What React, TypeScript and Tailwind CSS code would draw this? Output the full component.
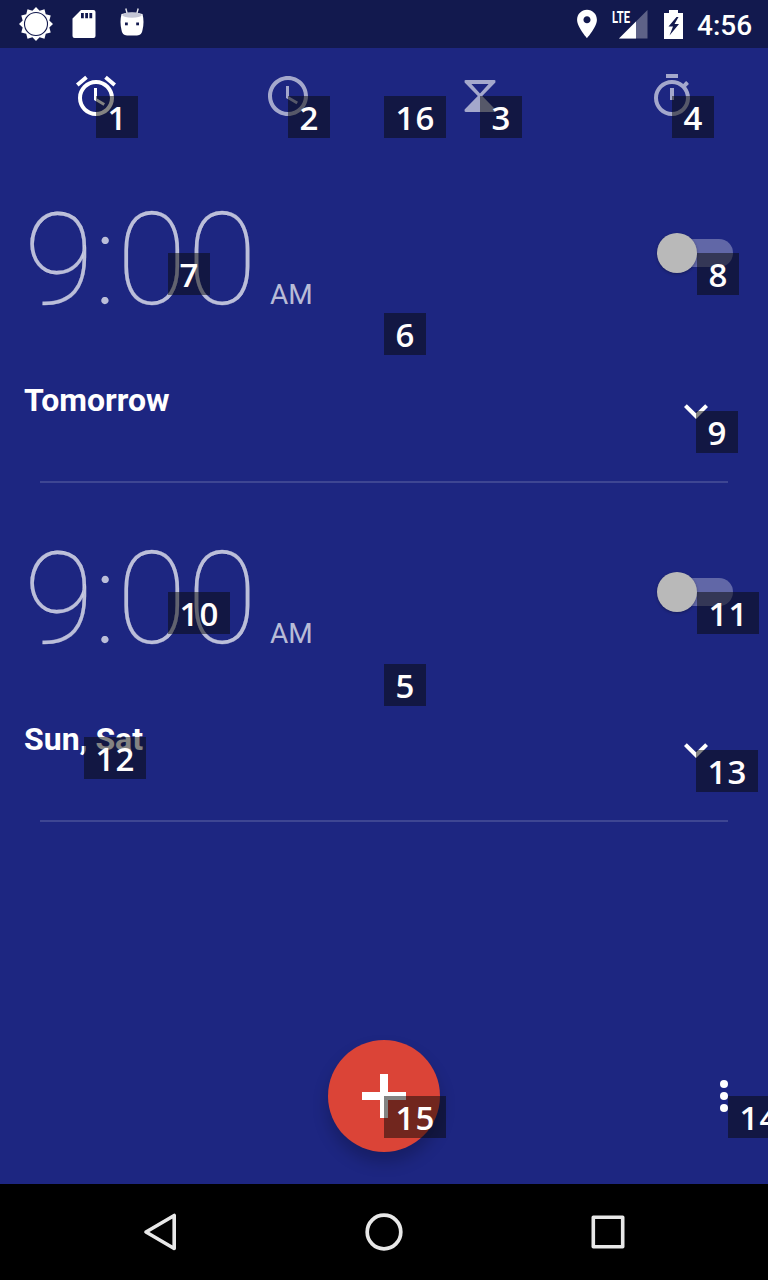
import React from "react";

function SunIcon() {
  const points = Array.from({ length: 24 }, (_, i) => {
    const a = (i * Math.PI) / 12;
    const r = i % 2 === 0 ? 17 : 13.8;
    return `${(17 + r * Math.sin(a)).toFixed(2)},${(17 - r * Math.cos(a)).toFixed(2)}`;
  }).join(" ");
  return (
    <svg className="h-[34px] w-[34px]" viewBox="0 0 34 34">
      <polygon points={points} fill="#fff" />
      <circle cx="17" cy="17" r="11.5" fill="#fff" stroke="#12194e" strokeWidth="1.1" />
    </svg>
  );
}

function SdCardIcon() {
  return (
    <svg className="ml-[19px] h-7 w-6" viewBox="0 0 24 28" fill="#fff">
      <path
        fillRule="evenodd"
        d="M9 0H21.500Q23.500 0 23.500 2V26Q23.500 28 21.500 28H2.500Q.5 28 .5 26V8.500ZM9 3V8.300H11.800V3ZM13.200 3V8.300H16V3ZM17.400 3V8.300H20.200V3Z"
      />
    </svg>
  );
}

function DroidIcon() {
  return (
    <svg className="mb-1 ml-6 h-7 w-6" viewBox="0 0 24 28">
      <path d="M5.800 .5L7.300 6M18.200 .5L16.700 6" stroke="#fff" strokeOpacity=".9" strokeWidth="1.400" />
      <path d="M1.500 6Q12 3 22.500 6Q24.500 14 22.500 22Q22 27 17 27.500H7Q2 27 1.500 22Q-.5 14 1.500 6Z" fill="#fff" />
      <path d="M2 7Q4 4.500 8 4.500H16Q20 4.500 22 7Q20 9.700 12 9.700Q4 9.700 2 7Z" fill="#c4c6d6" />
      <rect x="5" y="14.500" width="2.800" height="2.800" fill="#12194e" />
      <rect x="16.200" y="14.500" width="2.800" height="2.800" fill="#12194e" />
    </svg>
  );
}

function StatusBar() {
  return (
    <header className="flex h-12 shrink-0 items-center bg-[#12194e] pl-[19px] pr-4 text-white">
      <SunIcon />
      <SdCardIcon />
      <DroidIcon />
      <svg className="ml-auto h-[34px] w-[34px]" viewBox="0 0 24 24" fill="#fff">
        <path d="M12 2C8.130 2 5 5.130 5 9c0 5.250 7 13 7 13s7-7.750 7-13c0-3.870-3.130-7-7-7zm0 9.500c-1.380 0-2.500-1.120-2.500-2.500s1.120-2.500 2.500-2.500 2.500 1.120 2.500 2.500-1.120 2.500-2.500 2.500z" />
      </svg>
      <svg className="ml-2 h-[30px] w-9" viewBox="0 -1 36 30">
        <path d="M7 28.500L35.500 0V28.500Z" fill="#fff" fillOpacity=".32" />
        <path d="M7 28.500L24 11.500V28.500Z" fill="#fff" />
        <text
          x="0"
          y="12.800"
          fontFamily="Roboto"
          fontWeight="700"
          fontSize="17"
          textLength="18"
          lengthAdjust="spacingAndGlyphs"
          fill="#fff"
        >
          LTE
        </text>
      </svg>
      <svg className="mb-px ml-4 h-[30px] w-[19px]" viewBox="0 0 19 30" fill="#fff">
        <path
          fillRule="evenodd"
          d="M5 1H14V4H19V30H0V4H5ZM12.500 8L4.500 17.500H9L5.500 26.500L15 15H10.500L14.500 8Z"
        />
      </svg>
      <span className="ml-[14px] w-[55px] whitespace-nowrap pt-1 text-[28px] font-medium leading-none">4:56</span>
    </header>
  );
}

const tabIcons = [
  "M22 5.720l-4.600-3.860-1.290 1.530 4.600 3.860L22 5.720zM7.880 3.390L6.600 1.860 2 5.710l1.290 1.530 4.590-3.850zM12.500 8H11v6l4.750 2.850.750-1.230-4-2.370V8zM12 4c-4.970 0-9 4.030-9 9s4.020 9 9 9c4.970 0 9-4.030 9-9s-4.030-9-9-9zm0 16c-3.870 0-7-3.130-7-7s3.130-7 7-7 7 3.130 7 7-3.130 7-7 7z",
  "M11.990 2C6.470 2 2 6.480 2 12s4.470 10 9.990 10C17.520 22 22 17.520 22 12S17.520 2 11.990 2zM12 20c-4.420 0-8-3.580-8-8s3.580-8 8-8 8 3.580 8 8-3.580 8-8 8zM12.500 7H11v6l5.250 3.150.750-1.230-4.500-2.670V7z",
  "M4.800 4H19.200Q20 4 19.700 5.200L13.100 12L19.700 18.800Q20 20 19.200 20H4.800Q4 20 4.300 18.800L10.900 12L4.300 5.200Q4 4 4.800 4ZM7.700 6L12 10.700L16.300 6Z",
  "M15 1H9v2h6V1zm-4 13h2V8h-2v6zm8.030-6.610l1.420-1.420c-.430-.510-.900-.990-1.410-1.410l-1.420 1.420C16.070 4.740 14.120 4 12 4c-4.970 0-9 4.030-9 9s4.020 9 9 9 9-4.030 9-9c0-2.120-.740-4.070-1.970-5.610zM12 20c-3.870 0-7-3.130-7-7s3.130-7 7-7 7 3.130 7 7-3.130 7-7 7z",
];

function Tabs() {
  return (
    <nav className="grid h-24 shrink-0 grid-cols-4 place-items-center">
      {tabIcons.map((d, i) => (
        <svg key={i} className={i === 0 ? "h-12 w-12" : "h-12 w-12 opacity-60"} viewBox="0 0 24 24" fill="#fff">
          <path fillRule="evenodd" d={d} />
        </svg>
      ))}
    </nav>
  );
}

function Alarm({ days }: { days: string }) {
  return (
    <section className="flex h-[339px] shrink-0 flex-col">
      <div className="flex h-[218px] items-start justify-between pl-6 pr-[35px]">
        <div className="flex items-baseline pt-[41px] text-white/70">
          <span className="w-[232px] whitespace-nowrap text-[128px] font-thin leading-[151px] [-webkit-text-stroke:0.3px_rgba(255,255,255,0.5)]">
            9:00
          </span>
          <span className="pl-[14px] text-[28px] leading-none">AM</span>
        </div>
        <div className="mt-[89px] flex h-10 w-[76px] items-center rounded-full">
          <div className="z-1 h-10 w-10 shrink-0 rounded-full bg-[#b9b9b9] shadow-[0_1px_3px_rgba(0,0,0,0.3)]" />
          <div className="-ml-5 h-7 w-14 rounded-r-full bg-white/30" />
        </div>
      </div>
      <div className="flex h-[119px] items-start justify-between pl-6 pr-12">
        <span className="pt-[19px] text-[32px] font-bold leading-[38px] text-white">{days}</span>
        <svg className="mt-[25px] h-12 w-12" viewBox="0 0 24 24" fill="#fff">
          <path d="M16.590 8.590L12 13.170 7.410 8.590 6 10l6 6 6-6z" />
        </svg>
      </div>
      <div className="mx-10 h-0.5 bg-white/15" />
    </section>
  );
}

const markers: [string, number, number][] = [
  ["1", 96, 96],
  ["2", 288, 96],
  ["16", 384, 96],
  ["3", 480, 96],
  ["4", 672, 96],
  ["7", 168, 253],
  ["8", 697, 253],
  ["6", 384, 313],
  ["9", 696, 411],
  ["10", 168, 592],
  ["11", 697, 592],
  ["5", 384, 664],
  ["12", 84, 737],
  ["13", 696, 750],
  ["15", 384, 1096],
  ["14", 728, 1096],
];

function Marker({ label, x, y }: { label: string; x: number; y: number }) {
  return (
    <div
      className="absolute z-10 flex h-[42px] bg-[rgba(8,8,6,0.5)] px-[11px] font-['Open_Sans',sans-serif] text-[33px] font-semibold leading-[43px] text-[#fffdfd]"
      style={{ left: x, top: y }}
    >
      {label.split("").map((c, i) => (
        <span key={i} className="w-5 text-center">
          {c}
        </span>
      ))}
    </div>
  );
}

export default function App() {
  return (
    <div className="relative flex h-[1280px] w-[768px] flex-col overflow-hidden bg-[#1d2681] font-['Roboto',sans-serif]">
      <StatusBar />
      <Tabs />
      <Alarm days="Tomorrow" />
      <Alarm days="Sun, Sat" />
      <footer className="mt-auto grid h-[176px] shrink-0 grid-cols-3 items-center px-5">
        <span />
        <button className="flex h-28 w-28 items-center justify-center justify-self-center rounded-full bg-[#db4437] shadow-[0_10px_16px_rgba(0,0,0,0.22)]">
          <svg className="h-11 w-11" viewBox="0 0 44 44" fill="#fff">
            <path d="M18 0h8v18h18v8H26v18h-8V26H0v-8h18z" />
          </svg>
        </button>
        <svg className="h-12 w-12 justify-self-end" viewBox="0 0 24 24" fill="#fff">
          <circle cx="12" cy="6" r="2" />
          <circle cx="12" cy="12" r="2" />
          <circle cx="12" cy="18" r="2" />
        </svg>
      </footer>
      <nav className="grid h-24 shrink-0 grid-cols-3 place-items-center bg-black px-12">
        <svg className="h-12 w-12" viewBox="0 0 48 48" fill="none" stroke="#e8e8e8" strokeWidth="3.600" strokeLinejoin="round">
          <path d="M38.200 7.500V40.500L10 24Z" />
        </svg>
        <svg className="h-12 w-12" viewBox="0 0 48 48" fill="none" stroke="#e8e8e8" strokeWidth="3.700">
          <circle cx="24" cy="24" r="16.800" />
        </svg>
        <svg className="h-12 w-12" viewBox="0 0 48 48" fill="none" stroke="#e8e8e8" strokeWidth="3.600" strokeLinejoin="round">
          <rect x="9.300" y="9.300" width="29.400" height="29.400" />
        </svg>
      </nav>
      {markers.map(([label, x, y]) => (
        <Marker key={label} label={label} x={x} y={y} />
      ))}
    </div>
  );
}
